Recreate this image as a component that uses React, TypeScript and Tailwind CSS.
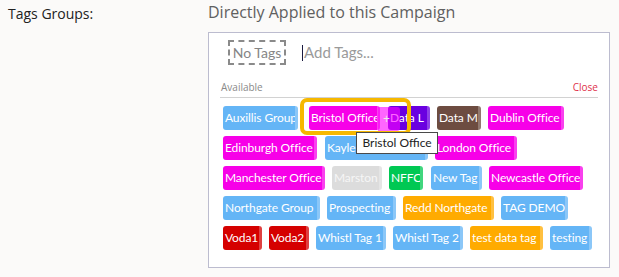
import React from "react";

type P = { label: string; w: number; c: string; ml?: number; t?: string };

const BLUE = "bg-[#64b5f6]";
const MAG = "bg-[#f700e8]";

function Pill({ label, w, c, ml = 7, t = "text-white" }: P) {
  return (
    <div
      className={`${c} ${t} h-[24px] shrink-0 rounded-[3px] border-r-[3px] border-white/25 pl-[2px] text-[12px] tracking-[-0.1px] leading-[24px] whitespace-nowrap overflow-hidden`}
      style={{ width: w, marginLeft: ml, fontFamily: 'Lato, "Open Sans", sans-serif' }}
    >
      {label}
    </div>
  );
}

export default function App() {
  return (
    <div
      className="w-[619px] h-[277px] bg-[#fbfaf9] overflow-hidden flex"
      style={{ fontFamily: '"Open Sans", sans-serif' }}
    >
      <div className="w-[208px] shrink-0 pl-2 pt-[4px] text-[14px] leading-[20px] text-[#222]">Tags Groups:</div>
      <div className="w-[402px] shrink-0">
        <div className="h-[32px] text-[16px] leading-[24px] text-[#606060]">Directly Applied to this Campaign</div>
        <div className="relative h-[236px] border border-[#bcbccf] bg-white px-[11px] pt-[7px]">
          <div className="flex items-center">
            <div
              className="ml-[8px] flex h-[25px] w-[58px] items-center justify-center border-2 border-dashed border-[#8a8a8a] text-[14px] text-[#858585]"
              style={{ fontFamily: 'Lato, sans-serif' }}
            >
              No Tags
            </div>
            <div className="ml-[16px] h-[16px] w-px bg-[#1a1a40]" />
            <div className="ml-px text-[15px] text-[#9a9a9a]" style={{ fontFamily: 'Lato, sans-serif' }}>Add Tags...</div>
          </div>
          <div className="mt-[14px] flex h-[19px] items-end justify-between border-b border-[#d2d2d2] pb-[4px] pl-px text-[10px] leading-[12px]">
            <span className="text-[#8a8a8a]">Available</span>
            <span className="text-[#e0304a]">Close</span>
          </div>
          <div className="mt-[8px] flex flex-col gap-[6px] pl-[3px]">
            <div className="flex">
              <Pill label="Auxillis Group" w={75} c={BLUE} ml={0} />
              <Pill label="Bristol Office" w={71} c={MAG} ml={11} />
              <Pill label="Data L" w={42} c="bg-[#6a00e0]" ml={8} />
              <Pill label="Data M" w={44} c="bg-[#6d4c41]" ml={7} />
              <Pill label="Dublin Office" w={76} c={MAG} ml={7} />
            </div>
            <div className="flex">
              <Pill label="Edinburgh Office" w={94} c={MAG} ml={0} />
              <Pill label="Kayleigh Office" w={103} c={BLUE} ml={8} />
              <Pill label="London Office" w={82} c={MAG} ml={7} />
            </div>
            <div className="flex">
              <Pill label="Manchester Office" w={102} c={MAG} ml={0} />
              <Pill label="Marston" w={50} c="bg-[#dcdcdc]" t="text-[#f6f6f6]" />
              <Pill label="NFFC" w={34} c="bg-[#00c853]" />
              <Pill label="New Tag" w={51} c={BLUE} ml={8} />
              <Pill label="Newcastle Office" w={94} c={MAG} />
            </div>
            <div className="flex">
              <Pill label="Northgate Group" w={97} c={BLUE} ml={0} />
              <Pill label="Prospecting" w={69} c={BLUE} />
              <Pill label="Redd Northgate" w={91} c="bg-[#ffab00]" />
              <Pill label="TAG DEMO" w={67} c={BLUE} />
            </div>
            <div className="flex">
              <Pill label="Voda1" w={39} c="bg-[#d50000]" ml={0} />
              <Pill label="Voda2" w={40} c="bg-[#d50000]" />
              <Pill label="Whistl Tag 1" w={70} c={BLUE} />
              <Pill label="Whistl Tag 2" w={70} c={BLUE} />
              <Pill label="test data tag" w={73} c="bg-[#ffab00]" />
              <Pill label="testing" w={42} c={BLUE} />
            </div>
          </div>

          {/* drag ghost overlay */}
          <div className="absolute left-[169px] top-[74px] h-[24px] w-[22px] rounded-r-[3px] bg-[#ff00ff]/60" />
          <div className="absolute left-[174px] top-[80px] text-[12px] leading-[12px] text-[#e8e8e8]">+</div>
          {/* focus ring */}
          <div className="absolute left-[91px] top-[65px] h-[37px] w-[111px] rounded-[7px] border-4 border-[#f6b800]" />
          {/* tooltip */}
          <div
            className="absolute left-[147px] top-[99px] flex h-[22px] w-[82px] items-center justify-center border border-[#4a4a4a] bg-white text-[12px] text-[#222]"
            style={{ fontFamily: 'Lato, sans-serif' }}
          >
            Bristol Office
          </div>
        </div>
      </div>
    </div>
  );
}
